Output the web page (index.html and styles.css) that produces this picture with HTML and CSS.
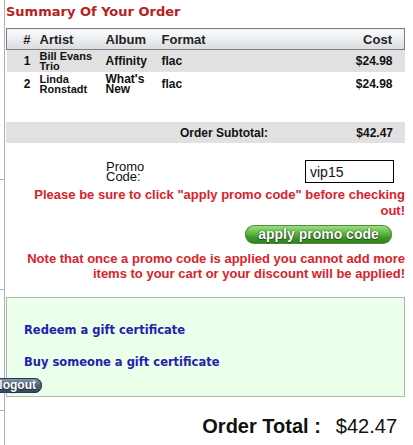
FILE: index.html
```html
<!DOCTYPE html>
<html>
<head>
<meta charset="utf-8">
<link rel="stylesheet" href="styles.css">
</head>
<body>
<div class="page">
  <div class="sidebar-ticks">
    <span class="tick t1"></span>
    <span class="tick t2"></span>
    <span class="tick t3"></span>
  </div>
  <a class="logout" href="#">logout</a>
  <main class="content">
    <h1 class="title">Summary Of Your Order</h1>
    <table class="cart">
      <thead>
        <tr>
          <th class="c-num">#</th>
          <th class="c-artist">Artist</th>
          <th class="c-album">Album</th>
          <th class="c-format">Format</th>
          <th class="c-cost">Cost</th>
        </tr>
      </thead>
      <tbody>
        <tr class="alt">
          <td class="c-num">1</td>
          <td class="c-artist">Bill Evans Trio</td>
          <td class="c-album">Affinity</td>
          <td class="c-format">flac</td>
          <td class="c-cost">$24.98</td>
        </tr>
        <tr>
          <td class="c-num">2</td>
          <td class="c-artist">Linda Ronstadt</td>
          <td class="c-album">What's New</td>
          <td class="c-format">flac</td>
          <td class="c-cost">$24.98</td>
        </tr>
      </tbody>
    </table>
    <div class="subtotal">
      <span class="sub-label">Order Subtotal:</span>
      <span class="sub-value">$42.47</span>
    </div>
    <div class="promo">
      <label class="promo-label" for="code">Promo Code:</label>
      <input class="promo-input" id="code" type="text" value="vip15">
    </div>
    <p class="warn warn-1">Please be sure to click "apply promo code" before checking out!</p>
    <div class="btn-row"><button class="apply">apply promo code</button></div>
    <p class="warn warn-2">Note that once a promo code is applied you cannot add more items to your cart or your discount will be applied!</p>
    <div class="gift">
      <a class="gift-link" href="#">Redeem a gift certificate</a>
      <a class="gift-link" href="#">Buy someone a gift certificate</a>
    </div>
    <div class="total">
      <span class="total-label">Order Total :</span>
      <span class="total-value">$42.47</span>
    </div>
  </main>
</div>
</body>
</html>
```
FILE: styles.css
```css
html, body {
  margin: 0;
  padding: 0;
  background: #fff;
}
body {
  font-family: "Liberation Sans", Arial, sans-serif;
  color: #111;
  width: 413px;
  height: 445px;
  overflow: hidden;
}
.page {
  position: relative;
  height: 445px;
}
.sidebar-ticks .tick {
  position: absolute;
  left: 0;
  width: 4px;
  height: 1px;
  background: #a9b1b9;
}
.t1 { top: 179px; }
.t2 { top: 289px; }
.t3 { top: 410px; }

.content {
  margin-left: 4px;
  border-left: 1px solid #a9b1b9;
  padding-left: 1px;
  width: 399px;
  height: 445px;
  box-sizing: content-box;
}
.title {
  margin: 0;
  padding-top: 3px;
  height: 25px;
  font-family: "DejaVu Sans", Verdana, sans-serif;
  font-size: 13px;
  line-height: 18px;
  font-weight: bold;
  color: #b52222;
}
.cart {
  width: 399px;
  border-collapse: collapse;
  font-size: 12px;
}
.cart thead th {
  height: 20px;
  padding: 0;
  font-size: 13px;
  font-weight: bold;
  color: #222;
  text-align: left;
  background: linear-gradient(#fbfcfd, #e9ebee 55%, #d8dbdf);
  border-top: 1px solid #7a7d82;
  border-bottom: 1px solid #7a7d82;
}
.cart thead th:first-child { border-left: 1px solid #7a7d82; }
.cart thead th:last-child { border-right: 1px solid #7a7d82; }
.cart td {
  height: 22px;
  padding: 0;
  font-weight: bold;
  line-height: 10px;
  color: #111;
}
.cart tr.alt td { background: #e1e1e1; }
.cart tbody tr:last-child td { height: 23px; }
.c-num { width: 33px; }
.cart .c-num { text-align: right; padding-right: 9px; box-sizing: border-box; }
.cart td.c-artist { font-size: 11px; }
.c-artist { width: 66px; }
.c-album { width: 56px; }
.c-format { width: 180px; }
.cart .c-cost { text-align: right; padding-right: 12px; }

.subtotal {
  margin-top: 27px;
  height: 21px;
  background: #e1e1e1;
  display: flex;
  align-items: center;
  font-size: 12px;
  font-weight: bold;
}
.sub-label { margin-left: 174px; }
.sub-value { margin-left: auto; margin-right: 12px; }

.promo {
  display: flex;
  align-items: center;
  margin-top: 17px;
  height: 23px;
}
.promo-label {
  margin-left: 100px;
  width: 40px;
  font-size: 13px;
  line-height: 10px;
}
.promo-input {
  margin-left: auto;
  margin-right: 11px;
  width: 89px;
  height: 23px;
  box-sizing: border-box;
  border: 1px solid #000;
  padding: 1px 4px 0;
  font-family: "Liberation Sans", Arial, sans-serif;
  font-size: 14px;
  color: #111;
  outline: none;
}
.warn {
  margin: 0;
  color: #d8232a;
  font-size: 13px;
  font-weight: bold;
  text-align: right;
}
.warn-1 { margin-top: 4px; line-height: 16px; padding-left: 20px; }
.btn-row {
  display: flex;
  justify-content: flex-end;
  margin-top: 6px;
  padding-right: 13px;
}
.apply {
  width: 147px;
  height: 19px;
  border: none;
  border-radius: 10px;
  background: linear-gradient(#a4e38c 0%, #6cc24e 35%, #3f9a2a 65%, #2d7c1d 100%);
  box-shadow: 0 0 0 1px #4d8d3a inset;
  color: #fff;
  font-family: "Liberation Sans", Arial, sans-serif;
  font-size: 14px;
  font-weight: bold;
  text-shadow: 0 1px 1px #224a14, 0 0 1px #224a14, 0 0 1px #224a14;
  padding: 0;
  line-height: 19px;
}
.warn-2 { margin-top: 7px; line-height: 15px; }

.gift {
  margin-top: 16px;
  background: #ebffeb;
  border: 1px solid #a8bca8;
  box-sizing: border-box;
  height: 100px;
  display: flex;
  flex-direction: column;
  align-items: flex-start;
  padding: 24px 0 0 17px;
  gap: 15px;
}
.gift-link {
  color: #2222aa;
  text-decoration: none;
  font-family: "DejaVu Sans", Verdana, sans-serif;
  font-size: 11.5px;
  font-weight: bold;
  line-height: 17px;
}
.total {
  display: flex;
  justify-content: flex-end;
  align-items: baseline;
  padding-right: 8px;
  margin-top: 17px;
  font-size: 20px;
  line-height: 24px;
}
.total-label { font-weight: bold; margin-right: 15px; }

.logout {
  position: absolute;
  left: -10px;
  top: 378px;
  width: 52px;
  height: 15px;
  box-sizing: border-box;
  padding-right: 6px;
  border-radius: 8px;
  background: linear-gradient(#8a9bb2, #51627a 50%, #33435a);
  box-shadow: 0 0 0 1px #2b3a4e inset;
  color: #fff;
  font-size: 12px;
  font-weight: bold;
  line-height: 15px;
  text-align: right;
  text-decoration: none;
  text-shadow: 0 1px 1px #1c2636;
  z-index: 2;
}
```
